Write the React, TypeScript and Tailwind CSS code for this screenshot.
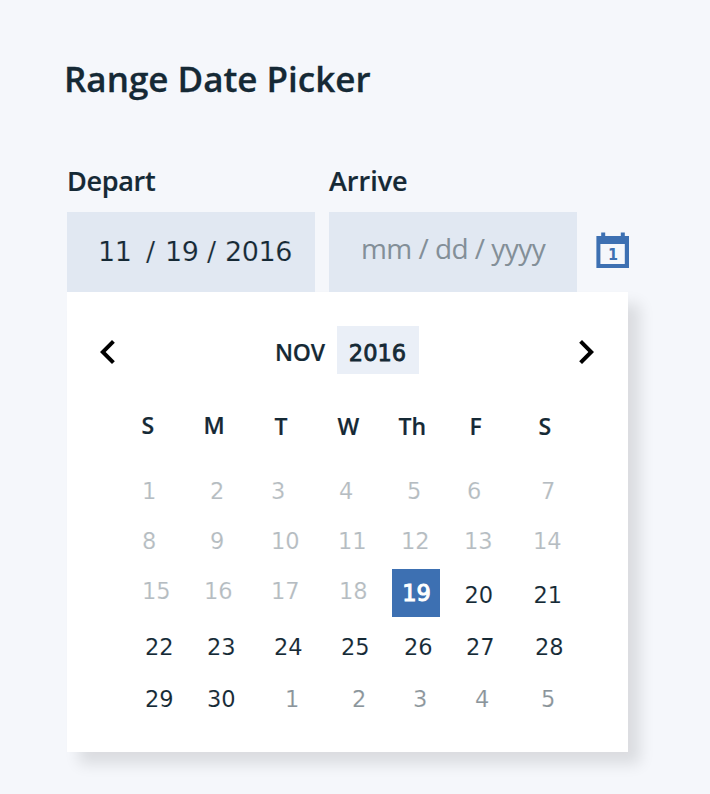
import React from "react";

const numerals = "font-['DejaVu_Sans','Noto_Sans',sans-serif]";
const words = "font-['Open_Sans','Noto_Sans',sans-serif]";

type Tone = "past" | "current" | "next" | "selected" | "shifted";

const tones: Record<Tone, string> = {
  past: "text-[#b5bcc1] [-webkit-text-stroke:0.15px_white]",
  current: "text-[#152935] [-webkit-text-stroke:0.1px_white]",
  next: "text-[#8a949a] [-webkit-text-stroke:0.15px_white]",
  shifted: "text-[#152935] pt-1 [-webkit-text-stroke:0.1px_white]",
  selected: "",
};

type Week = { layout: string; days: [number, Tone][] };

const weeks: Week[] = [
  {
    layout: "h-[50px] pl-[75px] grid-cols-[68px_61px_68px_68px_60px_74px_40px]",
    days: [[1, "past"], [2, "past"], [3, "past"], [4, "past"], [5, "past"], [6, "past"], [7, "past"]],
  },
  {
    layout: "h-[50px] pl-[75px] grid-cols-[68px_61px_67px_63px_63px_69px_40px]",
    days: [[8, "past"], [9, "past"], [10, "past"], [11, "past"], [12, "past"], [13, "past"], [14, "past"]],
  },
  {
    layout: "h-[56px] pl-[75px] grid-cols-[62px_67px_68px_52.5px_73px_69px_40px]",
    days: [[15, "past"], [16, "past"], [17, "past"], [18, "past"], [19, "selected"], [20, "shifted"], [21, "shifted"]],
  },
  {
    layout: "h-[52px] pl-[78px] grid-cols-[62px_67px_67px_63px_62px_69px_40px]",
    days: [[22, "current"], [23, "current"], [24, "current"], [25, "current"], [26, "current"], [27, "current"], [28, "current"]],
  },
  {
    layout: "h-[44px] pl-[78px] grid-cols-[62px_78px_67px_61px_62px_66px_40px]",
    days: [[29, "current"], [30, "current"], [1, "next"], [2, "next"], [3, "next"], [4, "next"], [5, "next"]],
  },
];

function Day({ day, tone }: { day: number; tone: Tone }) {
  if (tone === "selected") {
    return (
      <button className="-mt-2 flex h-12 w-12 items-center justify-center bg-[#3d70b2] pt-px pl-0.5 text-white [-webkit-text-stroke:1px_white]">
        {day}
      </button>
    );
  }
  return <span className={"leading-7 " + tones[tone]}>{day}</span>;
}

function CalendarIcon() {
  return (
    <svg width="34" height="36" viewBox="0 0 34 36" aria-hidden="true">
      <path
        fill="#3d70b2"
        fillRule="evenodd"
        d="M5.2.4h4V4h15.6V.4h4V4H33v32H.4V4h4.8zM4.4 12v20H28.8V12z"
      />
      <text
        x="17"
        y="28"
        textAnchor="middle"
        fontSize="16"
        fontWeight="700"
        fontFamily="DejaVu Sans Condensed, DejaVu Sans, sans-serif"
        fill="#3d70b2"
      >
        1
      </text>
    </svg>
  );
}

export default function App() {
  return (
    <main className={"h-[794px] w-[710px] overflow-hidden bg-[#f5f7fb] pl-[67px] text-[#152935] " + words}>
      <h1 className="-ml-[3px] pt-[55px] text-[35px] leading-[48px] font-semibold whitespace-nowrap [-webkit-text-stroke:0.3px_#152935]">
        Range Date Picker
      </h1>
      <div className="mt-[62px] flex h-[127px]">
        <div className="w-[248px]">
          <label className="block h-[47px] text-[27px] leading-[32px] font-semibold tracking-[-0.3px] [-webkit-text-stroke:0.2px_#152935]">Depart</label>
          <div className={"flex h-20 items-center bg-[#e1e8f2] pl-[31px] text-[27px] tracking-[-0.4px] [-webkit-text-stroke:0.2px_#e1e8f2] " + numerals}>
            <span className="w-[48px]">11</span>
            <span className="w-[19px]">/</span>
            <span className="w-[42px]">19</span>
            <span className="w-[18px]">/</span>
            <span>2016</span>
          </div>
        </div>
        <div className="ml-[14px] w-[248px]">
          <label className="block h-[47px] text-[27px] leading-[32px] font-semibold [-webkit-text-stroke:0.2px_#152935]">Arrive</label>
          <div className="flex h-20 items-center bg-[#e1e8f2] pl-8">
            <span className="pb-2 text-[28px] tracking-[-0.55px] whitespace-nowrap text-[#838f98]">mm / dd / yyyy</span>
          </div>
        </div>
        <div className="mt-[67px] ml-[19px]">
          <CalendarIcon />
        </div>
      </div>
      <section className="h-[460px] w-[561px] bg-white pt-[34px] shadow-[12px_12px_14px_rgba(0,0,0,0.11)]">
        <div className="flex h-12 items-center">
          <button className="ml-[17px] h-[52px] w-12 pt-1" aria-label="Previous month">
            <svg width="48" height="48" viewBox="0 0 24 24">
              <path d="M15.41 7.41L14 6l-6 6 6 6 1.41-1.41L10.83 12z" />
            </svg>
          </button>
          <span className="ml-[143px] w-[62px] pt-1 text-[23px] font-semibold tracking-[-0.2px] [-webkit-text-stroke:0.2px_#152935]">NOV</span>
          <span className={"flex h-12 w-[82px] items-center justify-center bg-[#eaeff7] pt-2 pr-px text-[22.5px] [-webkit-text-stroke:0.8px_#152935] " + numerals}>
            2016
          </span>
          <button className="ml-[143px] h-[52px] w-12 pt-1" aria-label="Next month">
            <svg width="48" height="48" viewBox="0 0 24 24">
              <path d="M10 6L8.59 7.41 13.17 12l-4.58 4.59L10 18l6-6z" />
            </svg>
          </button>
        </div>
        <div className="mt-[35px] grid h-[68px] grid-cols-[62px_71px_63px_61px_71px_69px_30px] pl-[74.5px] text-[23px] leading-[32px] font-semibold [-webkit-text-stroke:0.2px_#152935]">
          <span>S</span>
          <span>M</span>
          <span className="pt-px">T</span>
          <span className="pt-px">W</span>
          <span className="pt-px">Th</span>
          <span className="pt-px">F</span>
          <span className="pt-px">S</span>
        </div>
        <div className={"text-[22.5px] " + numerals}>
          {weeks.map((week, i) => (
            <div key={i} className={"grid items-start " + week.layout}>
              {week.days.map(([day, tone]) => (
                <Day key={day} day={day} tone={tone} />
              ))}
            </div>
          ))}
        </div>
      </section>
    </main>
  );
}
